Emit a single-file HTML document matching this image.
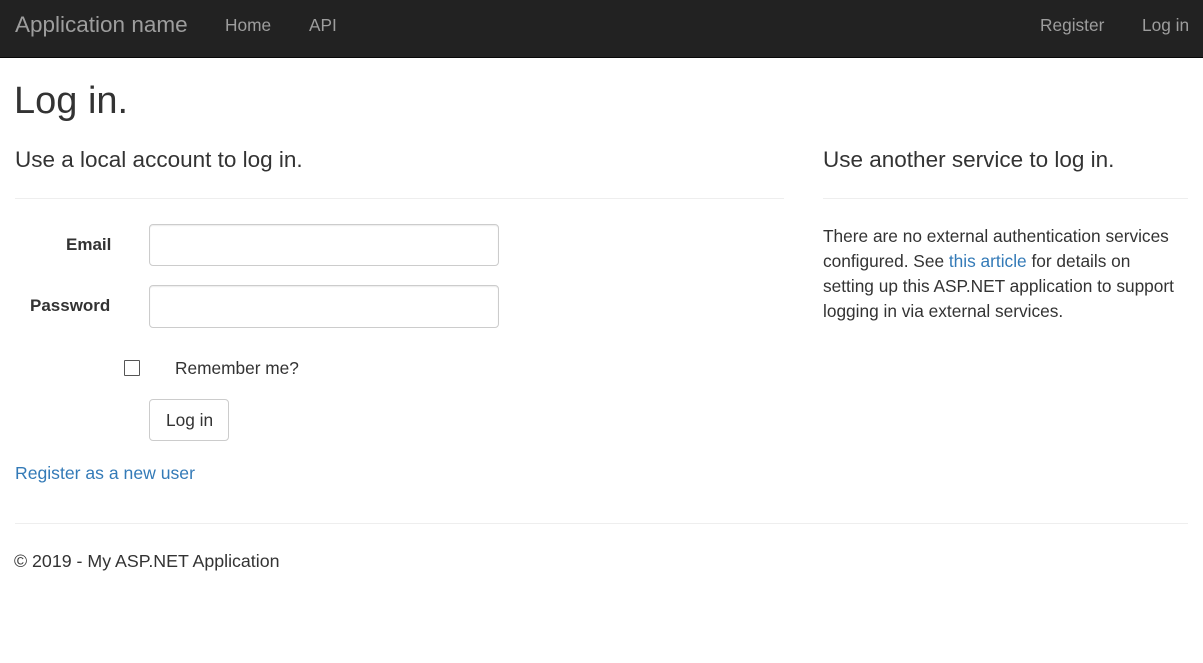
<!DOCTYPE html>
<html><head><meta charset="utf-8"><style>
*{margin:0;padding:0;box-sizing:border-box}
body{width:1203px;height:663px;background:#fff;font-family:"Liberation Sans",Arial,sans-serif;color:#333;font-size:17.3px;position:relative;overflow:hidden}
.a{position:absolute;white-space:nowrap}
.nav{position:absolute;left:0;top:0;width:1203px;height:58px;background:#222;border-bottom:1px solid #080808}
.nav .a{color:#9d9d9d}
a{color:#337ab7;text-decoration:none}
.hr{position:absolute;height:1px;background:#eee}
.inp{position:absolute;border:1px solid #ccc;border-radius:4px;background:#fff;box-shadow:inset 0 1px 1px rgba(0,0,0,.075)}
</style></head><body>
<div class="nav">
<div class="a" style="left:15px;top:12px;font-size:22.5px">Application name</div>
<div class="a" style="left:225px;top:15px">Home</div>
<div class="a" style="left:309px;top:15px">API</div>
<div class="a" style="left:1040px;top:15px">Register</div>
<div class="a" style="left:1142px;top:15px">Log in</div>
</div>
<div class="a" style="left:14px;top:80px;font-size:38px">Log in.</div>
<div class="a" style="left:15px;top:147px;font-size:22.5px">Use a local account to log in.</div>
<div class="a" style="left:823px;top:147px;font-size:22.5px">Use another service to log in.</div>
<div class="hr" style="left:15px;top:198px;width:769px"></div>
<div class="hr" style="left:823px;top:198px;width:365px"></div>
<div class="a" style="left:66px;top:235px;font-weight:bold;font-size:17px">Email</div>
<div class="a" style="left:30px;top:296px;font-weight:bold;font-size:17px">Password</div>
<div class="inp" style="left:149px;top:224px;width:350px;height:42px"></div>
<div class="inp" style="left:149px;top:285px;width:350px;height:43px"></div>
<div style="position:absolute;left:124px;top:360px;width:16px;height:16px;border:1px solid #555;border-radius:1px"></div>
<div class="a" style="left:175px;top:358px">Remember me?</div>
<div style="position:absolute;left:149px;top:399px;width:80px;height:42px;border:1px solid #ccc;border-radius:4px"></div>
<div class="a" style="left:166px;top:410px">Log in</div>
<div class="a" style="left:15px;top:463px;font-size:17.6px"><a>Register as a new user</a></div>
<div style="position:absolute;left:823px;top:224px;width:358px;line-height:25px">There are no external authentication services configured. See <a>this article</a> for details on setting up this ASP.NET application to support logging in via external services.</div>
<div class="hr" style="left:15px;top:523px;width:1173px"></div>
<div class="a" style="left:14px;top:551px;font-size:17.8px">© 2019 - My ASP.NET Application</div>
</body></html>
